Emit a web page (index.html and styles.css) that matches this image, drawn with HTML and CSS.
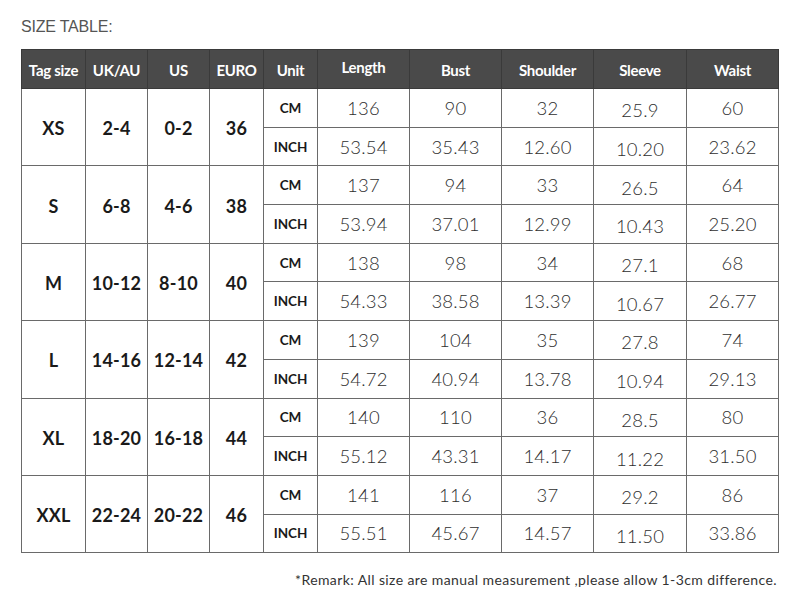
FILE: index.html
```html
<!DOCTYPE html>
<html>
<head>
<meta charset="utf-8">
<link rel="stylesheet" href="styles.css">
</head>
<body>
<div class="page">
  <div class="title">SIZE TABLE:</div>
  <table class="sizes">
    <colgroup>
      <col class="c-tag"><col class="c-uk"><col class="c-us"><col class="c-eu"><col class="c-unit">
      <col class="c-m"><col class="c-m"><col class="c-m"><col class="c-sl"><col class="c-w">
    </colgroup>
    <thead>
      <tr><th>Tag size</th><th>UK/AU</th><th>US</th><th>EURO</th><th>Unit</th><th class="up">Length</th><th>Bust</th><th>Shoulder</th><th>Sleeve</th><th>Waist</th></tr>
    </thead>
    <tbody>
      <tr><td rowspan="2" class="b">XS</td><td rowspan="2" class="b">2-4</td><td rowspan="2" class="b">0-2</td><td rowspan="2" class="b">36</td><td class="u">CM</td><td>136</td><td>90</td><td>32</td><td class="low">25.9</td><td>60</td></tr>
      <tr><td class="u">INCH</td><td>53.54</td><td>35.43</td><td>12.60</td><td class="low">10.20</td><td>23.62</td></tr>
      <tr><td rowspan="2" class="b">S</td><td rowspan="2" class="b">6-8</td><td rowspan="2" class="b">4-6</td><td rowspan="2" class="b">38</td><td class="u">CM</td><td>137</td><td>94</td><td>33</td><td class="low">26.5</td><td>64</td></tr>
      <tr><td class="u">INCH</td><td>53.94</td><td>37.01</td><td>12.99</td><td class="low">10.43</td><td>25.20</td></tr>
      <tr><td rowspan="2" class="b">M</td><td rowspan="2" class="b">10-12</td><td rowspan="2" class="b">8-10</td><td rowspan="2" class="b">40</td><td class="u">CM</td><td>138</td><td>98</td><td>34</td><td class="low">27.1</td><td>68</td></tr>
      <tr><td class="u">INCH</td><td>54.33</td><td>38.58</td><td>13.39</td><td class="low">10.67</td><td>26.77</td></tr>
      <tr><td rowspan="2" class="b">L</td><td rowspan="2" class="b">14-16</td><td rowspan="2" class="b">12-14</td><td rowspan="2" class="b">42</td><td class="u">CM</td><td>139</td><td>104</td><td>35</td><td class="low">27.8</td><td>74</td></tr>
      <tr><td class="u">INCH</td><td>54.72</td><td>40.94</td><td>13.78</td><td class="low">10.94</td><td>29.13</td></tr>
      <tr><td rowspan="2" class="b">XL</td><td rowspan="2" class="b">18-20</td><td rowspan="2" class="b">16-18</td><td rowspan="2" class="b">44</td><td class="u">CM</td><td>140</td><td>110</td><td>36</td><td class="low">28.5</td><td>80</td></tr>
      <tr><td class="u">INCH</td><td>55.12</td><td>43.31</td><td>14.17</td><td class="low">11.22</td><td>31.50</td></tr>
      <tr><td rowspan="2" class="b">XXL</td><td rowspan="2" class="b">22-24</td><td rowspan="2" class="b">20-22</td><td rowspan="2" class="b">46</td><td class="u">CM</td><td>141</td><td>116</td><td>37</td><td class="low">29.2</td><td>86</td></tr>
      <tr><td class="u">INCH</td><td>55.51</td><td>45.67</td><td>14.57</td><td class="low">11.50</td><td>33.86</td></tr>
    </tbody>
  </table>
  <div class="remark">*Remark: All size are manual measurement ,please allow 1-3cm difference.</div>
</div>
</body>
</html>
```
FILE: styles.css
```css
html, body {
  margin: 0;
  padding: 0;
  background: #ffffff;
}
.page {
  width: 800px;
  height: 605px;
  padding: 17px 23px 0 21px;
  box-sizing: border-box;
  font-family: Lato, "Open Sans", sans-serif;
  color: #222;
}
.title {
  font-family: "Liberation Sans", Arial, sans-serif;
  font-size: 16px;
  font-weight: 300;
  color: #555;
  letter-spacing: -0.2px;
  line-height: 19px;
  height: 19px;
}
.sizes {
  margin-top: 13px;
  border-collapse: collapse;
  table-layout: fixed;
  width: 757px;
}
.c-tag { width: 64px; }
.c-uk { width: 62px; }
.c-us { width: 62px; }
.c-eu { width: 54px; }
.c-unit { width: 54px; }
.c-m { width: 92px; }
.c-sl { width: 93px; }
.c-w { width: 92px; }
.sizes th {
  background: #4a4a4a;
  color: #fff;
  font-size: 15px;
  font-weight: 700;
  height: 39px;
  padding: 2px 0 0;
  border: 1px solid #3a3a3a;
  text-align: center;
  letter-spacing: -0.3px;
  box-sizing: border-box;
  white-space: nowrap;
}
.sizes th.up {
  padding: 0 0 4px;
}
.sizes td {
  border: 1px solid #6a6a6a;
  height: 38.7px;
  padding: 0;
  text-align: center;
  font-size: 18.5px;
  font-weight: 300;
  letter-spacing: 0.2px;
  color: #2e2e2e;
  box-sizing: border-box;
}
.sizes td.b {
  font-size: 18px;
  font-weight: 700;
  letter-spacing: 0.2px;
  color: #1a1a1a;
  padding-top: 2px;
}
.sizes td.u {
  font-size: 13.5px;
  font-weight: 700;
  letter-spacing: 0;
  color: #1a1a1a;
}
.sizes td.low {
  padding-top: 5px;
}
.remark {
  margin-top: 18px;
  text-align: right;
  font-size: 14px;
  color: #333;
  letter-spacing: 0.4px;
}
```
